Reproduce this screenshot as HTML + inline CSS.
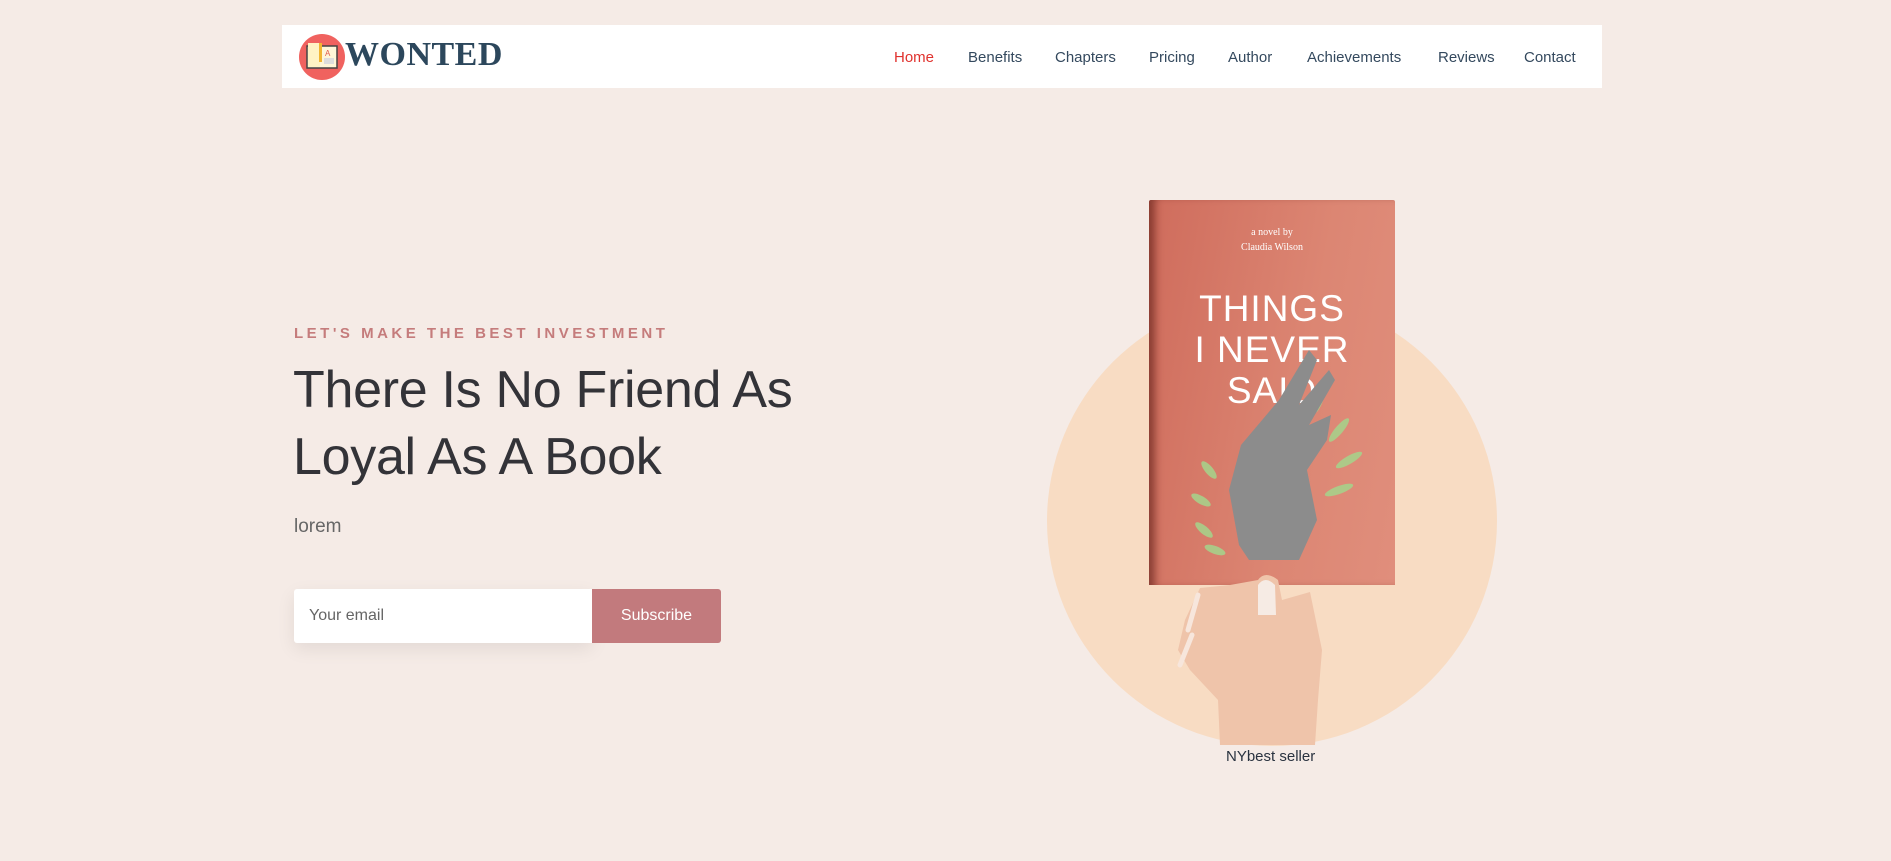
<!DOCTYPE html>
<html><head><meta charset="utf-8"><style>
*{margin:0;padding:0;box-sizing:border-box}
body{width:1891px;height:861px;background:#f5ebe6;font-family:"Liberation Sans",sans-serif;position:relative;overflow:hidden}
.nav{position:absolute;left:282px;top:25px;width:1320px;height:63px;background:#fff}
.logo{position:absolute;left:17px;top:9px;width:46px;height:46px;border-radius:50%;background:#f0625f}
.brand{position:absolute;left:63px;top:11px;font-family:"Liberation Serif",serif;font-size:34px;color:#2c475c;letter-spacing:0.5px;font-weight:bold}
.nav a{position:absolute;top:24px;font-size:15px;color:#34495e;text-decoration:none}
.tag{position:absolute;left:294px;top:325px;font-size:15px;letter-spacing:3.5px;color:#c57c7c;font-weight:bold}
h1{position:absolute;left:293px;top:357px;font-size:52px;font-weight:300;line-height:67px;color:#333338;letter-spacing:-0.3px}
.lorem{position:absolute;left:294px;top:516px;font-size:19px;color:#666}
.inp{position:absolute;left:294px;top:589px;width:298px;height:54px;background:#fff;border-radius:3px 0 0 3px;box-shadow:0 6px 18px rgba(0,0,0,.08);font-size:16px;color:#666;padding:18px 0 0 15px}
.btn{position:absolute;left:592px;top:589px;width:129px;height:54px;background:#c27a7d;color:#fff;font-size:16px;text-align:center;line-height:54px;border-radius:0 3px 3px 0}
.circle{position:absolute;left:1047px;top:296px;width:450px;height:450px;border-radius:50%;background:#f8dcc3}
.book{position:absolute;left:1149px;top:200px;width:246px;height:385px;background:linear-gradient(100deg,#cf6c5c,#dc8673 60%,#e08e7c);border-radius:2px 2px 0 0;box-shadow:inset 10px 0 8px -4px rgba(80,20,15,.55);color:#fff;text-align:center}
.book .by{position:absolute;top:25px;width:100%;font-family:"Liberation Serif",serif;font-size:10px;line-height:15px}
.book .t{position:absolute;top:88px;width:100%;font-size:37px;line-height:41px;font-weight:300;letter-spacing:1px}
.ny{position:absolute;left:1226px;top:748px;font-size:15px;color:#2a3340}
</style></head><body>
<div class="nav">
<div class="logo"><svg width="46" height="46" viewBox="0 0 46 46"><rect x="8" y="12" width="30" height="22" fill="#fff6d8" stroke="#444" stroke-width="1.5"/><rect x="9" y="9" width="12" height="24" fill="#fff3c4"/><rect x="20" y="9" width="3" height="19" fill="#f2b632"/><text x="26" y="22" font-size="8" fill="#e05a4a" font-family="Liberation Sans">A</text><rect x="25" y="24" width="10" height="6" fill="#ddd"/></svg></div>
<div class="brand">WONTED</div>
<a style="left:612px;color:#e0322e">Home</a>
<a style="left:686px">Benefits</a>
<a style="left:773px">Chapters</a>
<a style="left:867px">Pricing</a>
<a style="left:946px">Author</a>
<a style="left:1025px">Achievements</a>
<a style="left:1156px">Reviews</a>
<a style="left:1242px">Contact</a>
</div>
<div class="circle"></div>
<div class="book">
<div class="by">a novel by<br>Claudia Wilson</div>
<div class="t">THINGS<br>I NEVER<br>SAID</div>
<svg style="position:absolute;left:0;top:0" width="246" height="385" viewBox="0 0 246 385">
<g fill="#a8d08a" opacity=".9"><ellipse cx="60" cy="270" rx="4" ry="11" transform="rotate(-40 60 270)"/><ellipse cx="52" cy="300" rx="4" ry="11" transform="rotate(-60 52 300)"/><ellipse cx="55" cy="330" rx="4" ry="11" transform="rotate(-50 55 330)"/><ellipse cx="66" cy="350" rx="4" ry="11" transform="rotate(-70 66 350)"/><ellipse cx="190" cy="230" rx="4" ry="15" transform="rotate(40 190 230)"/><ellipse cx="200" cy="260" rx="4" ry="15" transform="rotate(60 200 260)"/><ellipse cx="190" cy="290" rx="4" ry="15" transform="rotate(70 190 290)"/><ellipse cx="170" cy="200" rx="4" ry="14" transform="rotate(20 170 200)"/></g>
<path d="M90 345 L80 290 L92 245 L130 200 L160 150 L168 160 L150 205 L180 170 L186 180 L160 225 L182 215 L178 240 L158 270 L168 320 L150 360 L100 360 Z" fill="#8c8c8c"/>
</svg>
</div>
<svg style="position:absolute;left:1170px;top:540px" width="180" height="205" viewBox="0 0 180 205">
<path d="M88 40 Q95 30 108 40 L112 60 L140 52 L152 110 L148 160 L145 205 L50 205 L48 160 L20 130 L8 110 L15 80 L30 48 L60 45 Z" fill="#efc4aa"/>
<path d="M88 45 Q95 35 105 45 L106 75 L88 75 Z" fill="#f6ebe4"/>
<path d="M28 55 L18 90 M22 95 L10 125" stroke="#f7e6dc" stroke-width="5" stroke-linecap="round"/>
</svg>
<div class="tag">LET'S MAKE THE BEST INVESTMENT</div>
<h1>There Is No Friend As<br>Loyal As A Book</h1>
<div class="lorem">lorem</div>
<div class="inp">Your email</div>
<div class="btn">Subscribe</div>
<div class="ny">NYbest seller</div>
</body></html>
